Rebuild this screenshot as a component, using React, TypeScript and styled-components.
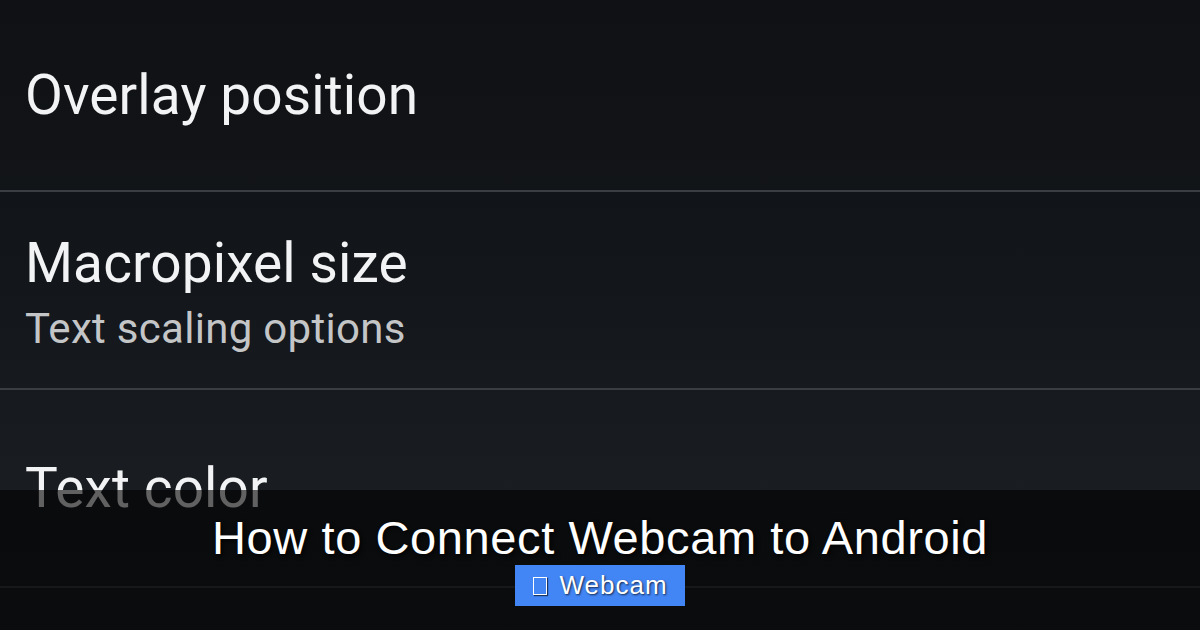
import React from 'react';
import styled, { createGlobalStyle } from 'styled-components';

const GlobalStyle = createGlobalStyle`
  html, body {
    margin: 0;
    padding: 0;
    background: #111317;
  }
  #root {
    width: 1200px;
    height: 630px;
  }
`;

const SCScreen = styled.div`
  position: relative;
  width: 1200px;
  height: 630px;
  overflow: hidden;
  background: linear-gradient(180deg, #0f1114 0%, #13161a 45%, #1a1d22 80%, #1b1e23 100%);
  font-family: Roboto, 'Noto Sans', sans-serif;
`;

const SCList = styled.div`
  display: flex;
  flex-direction: column;
`;

const SCRow = styled.div<{ $height: number }>`
  height: ${(p) => p.$height}px;
  display: flex;
  flex-direction: column;
  justify-content: center;
  padding-left: 25px;
  box-sizing: border-box;
`;

const SCDivider = styled.div`
  height: 2px;
  background: #3a3d42;
`;

const SCTitle = styled.div`
  color: #f2f3f4;
  font-size: 55px;
  line-height: 64px;
  letter-spacing: 0.1px;
`;

const SCSubtitle = styled.div`
  color: #c3c5c7;
  font-size: 42px;
  line-height: 54px;
  letter-spacing: 0.3px;
  margin-top: 7px;
  margin-bottom: -7px;
`;

const SCOverlay = styled.div`
  position: absolute;
  left: 0;
  right: 0;
  top: 490px;
  bottom: 0;
  background: rgba(0, 0, 0, 0.6);
  display: flex;
  flex-direction: column;
  align-items: center;
  padding-top: 20px;
  box-sizing: border-box;
  font-family: 'Liberation Sans', Arial, sans-serif;
`;

const SCHeadline = styled.h1`
  margin: 0;
  color: #ffffff;
  font-size: 47px;
  font-weight: 400;
  line-height: 56px;
  letter-spacing: 0.6px;
  text-shadow: 2px 2px 4px rgba(0, 0, 0, 0.8);
`;

const SCBadge = styled.div`
  margin-top: -1px;
  height: 41px;
  padding: 0 17px 0 18px;
  display: flex;
  align-items: center;
  gap: 12px;
  background: #4285f4;
  color: #ffffff;
  font-size: 26px;
  letter-spacing: 1px;
  text-shadow: 1px 1px 2px rgba(0, 0, 0, 0.7);
`;

const SCTofu = styled.span`
  width: 12px;
  height: 16px;
  border: 1.5px solid #ffffff;
  box-shadow: 1px 1px 1px rgba(0, 0, 0, 0.6);
`;

const settings = [
  { title: 'Overlay position', height: 190 },
  { title: 'Macropixel size', subtitle: 'Text scaling options', height: 196 },
  { title: 'Text color', height: 196 },
  { title: '', height: 60 },
];

const App = () => {
  return (
    <>
      <GlobalStyle />
      <SCScreen>
        <SCList>
          {settings.map((s, i) => (
            <React.Fragment key={i}>
              {i > 0 && <SCDivider />}
              <SCRow $height={s.height}>
                {s.title && <SCTitle>{s.title}</SCTitle>}
                {s.subtitle && <SCSubtitle>{s.subtitle}</SCSubtitle>}
              </SCRow>
            </React.Fragment>
          ))}
        </SCList>
        <SCOverlay>
          <SCHeadline>How to Connect Webcam to Android</SCHeadline>
          <SCBadge>
            <SCTofu />
            Webcam
          </SCBadge>
        </SCOverlay>
      </SCScreen>
    </>
  );
};

export default App;
